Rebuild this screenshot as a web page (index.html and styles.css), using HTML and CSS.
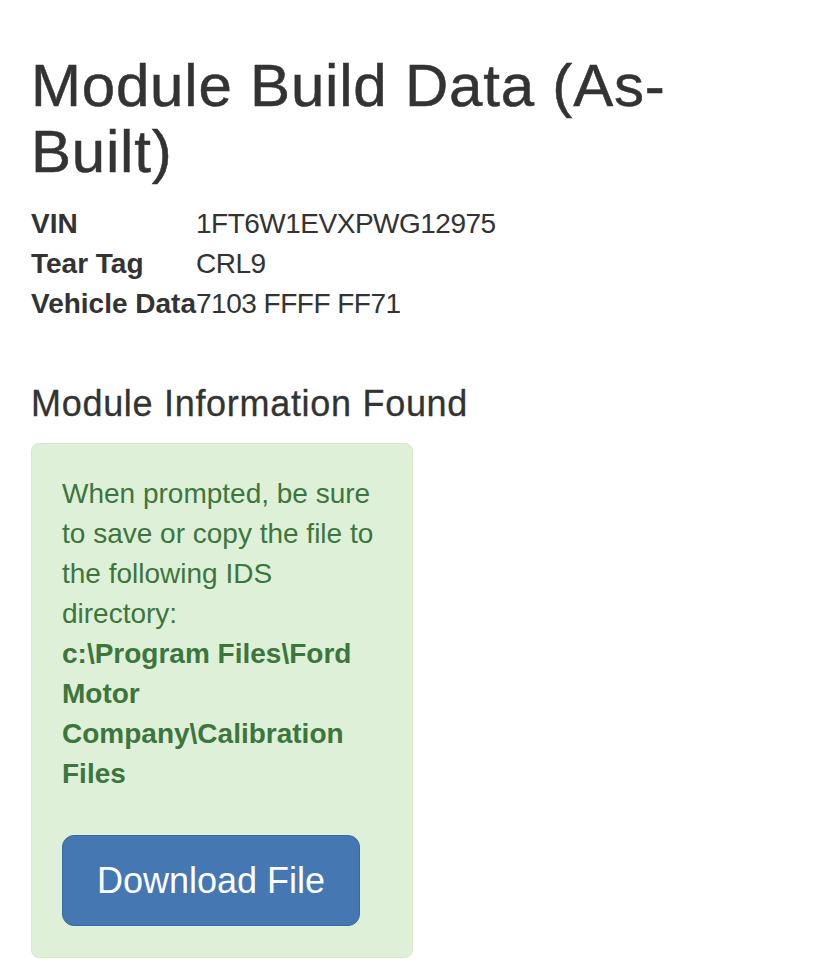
FILE: index.html
```
<!DOCTYPE html>
<html>
  <head>
    <meta charset="UTF-8" />
    <title>Module Build Data (As-Built)</title>
    <link rel="stylesheet" href="styles.css">
  </head>
  <body>
    <div class="container">
      <h1>Module Build Data (As-Built)</h1>
      <dl class="build-info">
        <dt>VIN</dt>
        <dd>1FT6W1EVXPWG12975</dd>
        <dt>Tear Tag</dt>
        <dd>CRL9</dd>
        <dt>Vehicle Data</dt>
        <dd>7103 FFFF FF71</dd>
      </dl>

      <h4>Module Information Found</h4>
      <div class="alert-success">
        <p>
          When prompted, be sure to save or copy the file to the following IDS directory:
          <strong>c:\Program Files\Ford Motor Company\Calibration Files</strong>
        </p>
        <a class="btn-download" href="#">Download File</a>
      </div>
    </div>
  </body>
</html>
```

FILE: styles.css
```
body {
  margin: 0;
  font-family: "Liberation Sans", Arial, sans-serif;
  font-size: 28px;
  line-height: 40px;
  color: #333;
  background: #fff;
}
.container {
  padding: 53px 30px 0 31px;
}
h1 {
  margin: 0 0 19px;
  font-size: 60px;
  font-weight: 500;
  line-height: 66px;
  letter-spacing: 0.8px;
  -webkit-text-stroke: 0.5px currentColor;
  width: 680px;
}
.build-info {
  margin: 0 0 60px;
}
.build-info dt {
  float: left;
  clear: left;
  width: 165px;
  font-weight: bold;
  white-space: nowrap;
}
.build-info dd {
  margin: 0;
  letter-spacing: -0.5px;
}
h4 {
  margin: 0 0 19px;
  font-size: 36px;
  font-weight: 500;
  line-height: 40px;
  letter-spacing: 0.7px;
  -webkit-text-stroke: 0.3px currentColor;
}
.alert-success {
  width: 320px;
  padding: 30px 30px 31px;
  background: #dff0d8;
  border: 1px solid #d6e9c6;
  border-radius: 8px;
  color: #3c763d;
}
.alert-success p {
  margin: 0 0 41px;
}
.alert-success strong {
  display: block;
}
.btn-download {
  display: inline-block;
  vertical-align: top;
  padding: 0 34px;
  height: 89px;
  line-height: 89px;
  font-size: 36px;
  color: #fff;
  text-decoration: none;
  background: #4577b3;
  border: 1px solid #3a6aa3;
  border-radius: 12px;
}
```
